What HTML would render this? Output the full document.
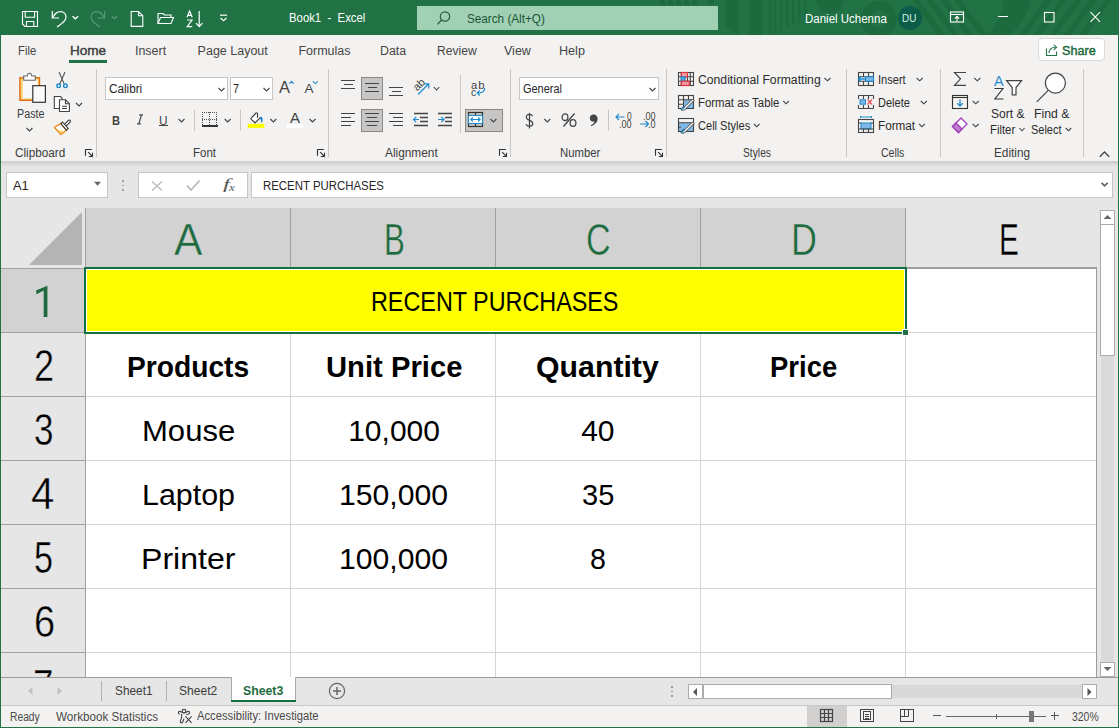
<!DOCTYPE html>
<html><head><meta charset="utf-8">
<style>
*{margin:0;padding:0;box-sizing:border-box}
html,body{width:1119px;height:728px;overflow:hidden;background:#f3f2f1;font-family:"Liberation Sans",sans-serif;position:relative}
.a{position:absolute}
.t{position:absolute;white-space:nowrap;line-height:1;transform-origin:0 0}
svg{overflow:visible}
</style></head><body>
<div class="a" style="left:0px;top:0px;width:1119px;height:35px;background:#217346"></div>
<div class="a" style="left:0px;top:35px;width:1119px;height:126px;background:#f3f2f1"></div>
<div class="a" style="left:0px;top:161px;width:1119px;height:47px;background:#e6e6e6"></div>
<div class="a" style="left:0px;top:161px;width:1119px;height:6px;background:linear-gradient(#cbcac9,#e6e6e6)"></div>
<svg class="a" style="left:0px;top:0px;overflow:hidden" width="1119" height="35" viewBox="0 0 1119 35"><g fill="#1d6a3e"><rect x="660" y="0" width="5" height="5"/><rect x="668" y="0" width="5" height="5"/><rect x="676" y="0" width="5" height="5"/><rect x="684" y="0" width="5" height="5"/><rect x="692" y="0" width="5" height="5"/><rect x="708" y="0" width="6" height="5"/><path d="M726,0 H739 V35 L726,27 Z"/><rect x="749" y="0" width="13" height="35"/><path d="M769,0 h2.5 V35 L769,38 Z"/><path d="M774,0 h2.5 V32 L774,35 Z"/><path d="M780,0 h2.5 V29 L780,32 Z"/><path d="M786,0 h2.5 V26 L786,29 Z"/><path d="M792,0 h2.5 V23 L792,26 Z"/><path d="M798,0 h2.5 V20 L798,23 Z"/><path d="M804,0 h2.5 V17 L804,20 Z"/><path d="M816,0 A14,13 0 0 0 844,0 Z"/><circle cx="879" cy="19" r="13.5" fill="none" stroke-width="9" stroke="#1d6a3e"/><path d="M912,0 h7 l26,35 h-7 Z"/><path d="M926,0 h7 l26,35 h-7 Z"/><path d="M940,0 h7 l26,35 h-7 Z"/><path d="M954,0 h7 l26,35 h-7 Z"/><path d="M1004,0 H1031 Q1027,22 1009,35 H986 Q1003,20 1004,0 Z"/><path d="M1045,0 h7 l-26,35 h-7 Z"/><path d="M1060,0 h7 l-26,35 h-7 Z"/><path d="M1075,0 h7 l-26,35 h-7 Z"/><path d="M1090,0 h7 l-26,35 h-7 Z"/><path d="M1105,0 h7 l-26,35 h-7 Z"/></g></svg>
<svg class="a" style="left:20px;top:9px;" width="22" height="22" viewBox="0 0 22 22"><g fill="none" stroke="#ffffff" stroke-width="1.1"><path d="M2.5,2.5 H17.5 V17.5 H5 L2.5,15 Z"/><path d="M5.2,2.5 V8.2 H14.6 V2.5"/><path d="M6.5,17.5 V12.5 H13.8 V17.5"/></g></svg>
<svg class="a" style="left:50px;top:9px;" width="32" height="22" viewBox="0 0 32 22"><g fill="none" stroke="#ffffff" stroke-width="1.2"><path d="M2.3,2 V9 H9"/><path d="M2.8,8.5 C5,4 8,2.6 10.5,2.6 C13.6,2.6 16,5 16,8 C16,10.8 14.5,12.6 7,18"/><path d="M22.5,7.3 L25.3,9.8 L28.1,7.3" stroke-width="1.3"/></g></svg>
<svg class="a" style="left:89px;top:9px;" width="32" height="22" viewBox="0 0 32 22"><g fill="none" stroke="#5e9c78" stroke-width="1.1"><path d="M15.7,2 V9 H9"/><path d="M15.2,8.5 C13,4 10,2.6 7.5,2.6 C4.4,2.6 2,5 2,8 C2,10.8 3.5,12.6 11,18"/><path d="M22.8,7.3 L25.5,9.8 L28.2,7.3" stroke-width="1.2"/></g></svg>
<svg class="a" style="left:128px;top:9px;" width="18" height="20" viewBox="0 0 18 20"><g fill="none" stroke="#ffffff" stroke-width="1.1"><path d="M3.2,2.5 H10.5 L14.8,6.8 V17.4 H3.2 Z"/><path d="M10.5,2.5 V6.8 H14.8"/></g></svg>
<svg class="a" style="left:155px;top:9px;" width="22" height="18" viewBox="0 0 22 18"><g fill="none" stroke="#ffffff" stroke-width="1.1"><path d="M3,14.5 V4.5 H8 L9.5,6 H16 V8.5"/><path d="M3,14.5 L5.5,8.5 H18.5 L16,14.5 Z"/></g></svg>
<svg class="a" style="left:184px;top:9px;" width="22" height="20" viewBox="0 0 22 20"><g fill="none" stroke="#ffffff" stroke-width="1.2"><path d="M3,8.3 L5.6,2 L8.2,8.3 M3.9,6.3 H7.3"/><path d="M3.2,11 H8 L3.2,17.6 H8.2"/><path d="M15.2,2 V17.5 M12,14.2 L15.2,17.6 L18.4,14.2"/></g></svg>
<svg class="a" style="left:217px;top:12px;" width="12" height="12" viewBox="0 0 12 12"><g fill="none" stroke="#ffffff" stroke-width="1.2"><path d="M3,3.2 H10"/><path d="M3.5,6 L6.5,8.8 L9.5,6"/></g></svg>
<div class="t" style="left:288.60px;top:12.42px;font-size:12px;color:#fff;transform:scaleX(0.9455);">Book1&nbsp; -&nbsp; Excel</div>
<div class="a" style="left:417px;top:6px;width:301px;height:24px;background:#a1d0b4"></div>
<svg class="a" style="left:434px;top:9px;" width="20" height="20" viewBox="0 0 20 20"><g fill="none" stroke="#1f5d3b" stroke-width="1.2"><circle cx="11" cy="7.5" r="4.7"/><path d="M7.6,11 L3.5,15.3"/></g></svg>
<div class="t" style="left:466.80px;top:13.22px;font-size:12px;color:#1a5535;transform:scaleX(0.9763);">Search (Alt+Q)</div>
<div class="t" style="left:804.60px;top:13.42px;font-size:12px;color:#fff;transform:scaleX(0.9578);">Daniel Uchenna</div>
<svg class="a" style="left:897px;top:6px;" width="26" height="26" viewBox="0 0 26 26"><circle cx="13" cy="12" r="12" fill="#0c5c4a"/></svg>
<div class="t" style="left:902.40px;top:13.35px;font-size:11.5px;color:#d6efe4;transform:scaleX(0.8611);">DU</div>
<svg class="a" style="left:948px;top:9px;" width="18" height="16" viewBox="0 0 18 16"><g fill="none" stroke="#ffffff" stroke-width="1.1"><rect x="2.5" y="3" width="13" height="10"/><path d="M2.5,5.5 H15.5"/><path d="M9,12.5 V7.5 M6.8,9.6 L9,7.4 L11.2,9.6"/></g></svg>
<div class="a" style="left:998px;top:16px;width:10px;height:1px;background:#fff"></div>
<svg class="a" style="left:1042px;top:10px;" width="14" height="14" viewBox="0 0 14 14"><rect x="2.5" y="2.5" width="9.5" height="9.5" fill="none" stroke="#ffffff" stroke-width="1.1"/></svg>
<svg class="a" style="left:1088px;top:10px;" width="14" height="14" viewBox="0 0 14 14"><path d="M2.5,2.2 L12,11.8 M12,2.2 L2.5,11.8" fill="none" stroke="#ffffff" stroke-width="1.1"/></svg>
<div class="t" style="left:18.40px;top:45.00px;font-size:12.5px;color:#454545;transform:scaleX(0.9038);">File</div>
<div class="t" style="left:134.60px;top:45.00px;font-size:12.5px;color:#454545;transform:scaleX(0.9948);">Insert</div>
<div class="t" style="left:197.60px;top:45.00px;font-size:12.5px;color:#454545;">Page Layout</div>
<div class="t" style="left:298.40px;top:45.00px;font-size:12.5px;color:#454545;">Formulas</div>
<div class="t" style="left:380.30px;top:45.00px;font-size:12.5px;color:#454545;transform:scaleX(0.9920);">Data</div>
<div class="t" style="left:436.50px;top:45.00px;font-size:12.5px;color:#454545;transform:scaleX(0.9677);">Review</div>
<div class="t" style="left:504.00px;top:45.00px;font-size:12.5px;color:#454545;">View</div>
<div class="t" style="left:559.20px;top:45.00px;font-size:12.5px;color:#454545;transform:scaleX(1.0073);">Help</div>
<div class="t" style="left:69.70px;top:45.00px;font-size:12.5px;color:#404040;transform:scaleX(1.0825);-webkit-text-stroke:0.4px #404040;">Home</div>
<div class="a" style="left:69px;top:60px;width:38px;height:3px;background:#217346"></div>
<div class="a" style="left:1038px;top:38px;width:67px;height:23px;background:#fff;border:1px solid #dcdad8;border-radius:4px"></div>
<svg class="a" style="left:1044px;top:42px;" width="16" height="16" viewBox="0 0 16 16"><g fill="none" stroke="#217346" stroke-width="1.1"><path d="M2.5,6.5 V13.5 H12.5 V9.5"/><path d="M4.8,11 C5.5,7 8,5.2 11.5,5.2"/><path d="M9.8,2.8 L12.6,5.2 L9.8,7.8"/></g></svg>
<div class="t" style="left:1062.20px;top:44.28px;font-size:13px;color:#1d6b3e;transform:scaleX(0.9716);-webkit-text-stroke:0.45px #1d6b3e;">Share</div>
<div class="a" style="left:96px;top:69px;width:1px;height:88px;background:#c8c6c4"></div>
<div class="a" style="left:328px;top:69px;width:1px;height:88px;background:#c8c6c4"></div>
<div class="a" style="left:510px;top:69px;width:1px;height:88px;background:#c8c6c4"></div>
<div class="a" style="left:666px;top:69px;width:1px;height:88px;background:#c8c6c4"></div>
<div class="a" style="left:846px;top:69px;width:1px;height:88px;background:#c8c6c4"></div>
<div class="a" style="left:940px;top:69px;width:1px;height:88px;background:#c8c6c4"></div>
<div class="a" style="left:1083px;top:69px;width:1px;height:88px;background:#c8c6c4"></div>
<div class="a" style="left:194px;top:110px;width:1px;height:21px;background:#c8c6c4"></div>
<div class="a" style="left:240px;top:110px;width:1px;height:21px;background:#c8c6c4"></div>
<div class="a" style="left:460px;top:75px;width:1px;height:58px;background:#c8c6c4"></div>
<div class="a" style="left:608px;top:110px;width:1px;height:21px;background:#c8c6c4"></div>
<div class="t" style="left:15.40px;top:147.42px;font-size:12px;color:#3b3b3b;transform:scaleX(0.9794);">Clipboard</div>
<div class="t" style="left:192.80px;top:147.42px;font-size:12px;color:#3b3b3b;transform:scaleX(0.9579);">Font</div>
<div class="t" style="left:385.00px;top:147.42px;font-size:12px;color:#3b3b3b;transform:scaleX(0.9876);">Alignment</div>
<div class="t" style="left:560.40px;top:147.42px;font-size:12px;color:#3b3b3b;transform:scaleX(0.9465);">Number</div>
<div class="t" style="left:742.50px;top:147.42px;font-size:12px;color:#3b3b3b;transform:scaleX(0.8569);">Styles</div>
<div class="t" style="left:881.40px;top:147.42px;font-size:12px;color:#3b3b3b;transform:scaleX(0.8753);">Cells</div>
<div class="t" style="left:993.60px;top:147.42px;font-size:12px;color:#3b3b3b;transform:scaleX(0.9810);">Editing</div>
<svg class="a" style="left:85px;top:149px;" width="9" height="9" viewBox="0 0 9 9"><g fill="none" stroke="#333" stroke-width="1.1"><path d="M0.5,6.8 V0.5 H6.8"/><path d="M3.2,3.2 L7.5,7.5 M3.8,7.5 H7.5 V3.8"/></g></svg>
<svg class="a" style="left:317px;top:149px;" width="9" height="9" viewBox="0 0 9 9"><g fill="none" stroke="#333" stroke-width="1.1"><path d="M0.5,6.8 V0.5 H6.8"/><path d="M3.2,3.2 L7.5,7.5 M3.8,7.5 H7.5 V3.8"/></g></svg>
<svg class="a" style="left:499px;top:149px;" width="9" height="9" viewBox="0 0 9 9"><g fill="none" stroke="#333" stroke-width="1.1"><path d="M0.5,6.8 V0.5 H6.8"/><path d="M3.2,3.2 L7.5,7.5 M3.8,7.5 H7.5 V3.8"/></g></svg>
<svg class="a" style="left:655px;top:149px;" width="9" height="9" viewBox="0 0 9 9"><g fill="none" stroke="#333" stroke-width="1.1"><path d="M0.5,6.8 V0.5 H6.8"/><path d="M3.2,3.2 L7.5,7.5 M3.8,7.5 H7.5 V3.8"/></g></svg>
<svg class="a" style="left:17px;top:71px;" width="32" height="34" viewBox="0 0 32 34"><rect x="2.9" y="6.8" width="19.6" height="22.5" fill="#f9d27a" stroke="#e36c09" stroke-width="1.4"/><rect x="5.8" y="8.6" width="14.8" height="18.9" fill="#f8f8f8"/><path d="M6.7,9.3 V5 H10.2 C10.5,3 11.4,2.3 12.5,2.3 C13.6,2.3 14.5,3 14.8,5 H18.3 V9.3 Z" fill="#fff" stroke="#666" stroke-width="1.1"/><rect x="15.8" y="14.7" width="12.6" height="16.6" fill="#fafafa" stroke="#333" stroke-width="1.2"/></svg>
<div class="t" style="left:16.50px;top:108.42px;font-size:12px;color:#3b3b3b;transform:scaleX(0.8962);">Paste</div>
<svg class="a" style="left:25px;top:127px;" width="9" height="6" viewBox="0 0 9 6"><path d="M1.50,1.00 L4.50,4.00 L7.50,1.00" fill="none" stroke="#444" stroke-width="1.1"/></svg>
<svg class="a" style="left:55px;top:71px;" width="14" height="19" viewBox="0 0 14 19"><g fill="none" stroke-width="1.1"><path d="M4,1 L9.2,13 M10,1 L4.8,13" stroke="#555"/><circle cx="3.6" cy="14.8" r="1.8" stroke="#1e8bcd" stroke-width="1.4"/><circle cx="10.4" cy="14.8" r="1.8" stroke="#1e8bcd" stroke-width="1.4"/></g></svg>
<svg class="a" style="left:53px;top:95px;" width="19" height="18" viewBox="0 0 19 18"><g fill="#fff" stroke="#444" stroke-width="1.1"><path d="M1.3,1.5 H7.5 L9,3 V13.5 H1.3 Z"/><path d="M6.5,4.8 H12.5 L16.4,8.7 V16.5 H6.5 Z"/><path d="M12.5,4.8 V8.7 H16.4" fill="none"/><path d="M9,11.2 H14 M9,13.5 H14" fill="none"/></g></svg>
<svg class="a" style="left:75px;top:102px;" width="9" height="6" viewBox="0 0 9 6"><path d="M1.00,1.00 L4.00,4.00 L7.00,1.00" fill="none" stroke="#444" stroke-width="1.1"/></svg>
<svg class="a" style="left:50px;top:115px;" width="24" height="23" viewBox="0 0 24 23"><path d="M4.3,12.2 L10.8,8.6 L16.4,15.2 L11,19.6 Z" fill="#fff" stroke="#e8860e" stroke-width="1.3" stroke-linejoin="round"/><path d="M7.5,14.6 L14.3,16.6 L11,18.6 Z" fill="#fbd46b"/><path d="M14.2,9.6 L18.4,5.4 C19,4.8 20,5 20.3,5.7 C20.6,6.3 20.3,6.9 19.9,7.3 L15.8,11.4" fill="#fff" stroke="#333" stroke-width="1.1"/><path d="M10.8,8.6 L12.4,7 L18.2,13.4 L16.4,15.2 Z" fill="#fff" stroke="#333" stroke-width="1.1"/></svg>
<div class="a" style="left:105px;top:77px;width:123px;height:23px;background:#fff;border:1px solid #c8c6c4"></div>
<div class="t" style="left:108.50px;top:83.20px;font-size:12.5px;color:#262626;transform:scaleX(0.9372);">Calibri</div>
<svg class="a" style="left:217px;top:87px;" width="9" height="6" viewBox="0 0 9 6"><path d="M1.50,1.00 L4.50,4.00 L7.50,1.00" fill="none" stroke="#444" stroke-width="1.1"/></svg>
<div class="a" style="left:230px;top:77px;width:43px;height:23px;background:#fff;border:1px solid #c8c6c4"></div>
<div class="t" style="left:233.00px;top:83.20px;font-size:12.5px;color:#262626;transform:scaleX(0.8633);">7</div>
<svg class="a" style="left:262px;top:87px;" width="9" height="6" viewBox="0 0 9 6"><path d="M1.50,1.00 L4.50,4.00 L7.50,1.00" fill="none" stroke="#444" stroke-width="1.1"/></svg>
<div class="t" style="left:279.00px;top:78.78px;font-size:17px;color:#444;transform:scaleX(0.9701);">A</div>
<svg class="a" style="left:288px;top:80px;" width="7" height="5" viewBox="0 0 7 5"><path d="M1.3,3.6 L3.5,1.3 L5.7,3.6" fill="none" stroke="#1e8bcd" stroke-width="1.1"/></svg>
<div class="t" style="left:304.40px;top:82.35px;font-size:13.5px;color:#444;">A</div>
<svg class="a" style="left:311px;top:80px;" width="8" height="5" viewBox="0 0 8 5"><path d="M1.80,1.40 L4.30,3.60 L6.80,1.40" fill="none" stroke="#1e8bcd" stroke-width="1.1"/></svg>
<div class="t" style="left:112.20px;top:113.58px;font-size:13px;color:#444;font-weight:bold;transform:scaleX(0.8523);">B</div>
<svg class="a" style="left:135px;top:113px;" width="10" height="13" viewBox="0 0 10 13"><path d="M4.2,1.8 H8 M6.5,1.8 L3.8,10.8 M2,10.8 H5.8" fill="none" stroke="#444" stroke-width="1.2"/></svg>
<div class="t" style="left:159.00px;top:113.58px;font-size:13px;color:#444;transform:scaleX(0.9056);">U</div>
<div class="a" style="left:159px;top:125px;width:9px;height:1px;background:#444"></div>
<svg class="a" style="left:177px;top:118px;" width="9" height="6" viewBox="0 0 9 6"><path d="M1.50,1.00 L4.50,4.00 L7.50,1.00" fill="none" stroke="#444" stroke-width="1.1"/></svg>
<svg class="a" style="left:201px;top:111px;" width="18" height="18" viewBox="0 0 18 18"><g fill="#555" shape-rendering="crispEdges"><rect x="1" y="1" width="1" height="1"/><rect x="1" y="8" width="1" height="1"/><rect x="3" y="1" width="1" height="1"/><rect x="3" y="8" width="1" height="1"/><rect x="5" y="1" width="1" height="1"/><rect x="5" y="8" width="1" height="1"/><rect x="7" y="1" width="1" height="1"/><rect x="7" y="8" width="1" height="1"/><rect x="9" y="1" width="1" height="1"/><rect x="9" y="8" width="1" height="1"/><rect x="11" y="1" width="1" height="1"/><rect x="11" y="8" width="1" height="1"/><rect x="13" y="1" width="1" height="1"/><rect x="13" y="8" width="1" height="1"/><rect x="15" y="1" width="1" height="1"/><rect x="15" y="8" width="1" height="1"/><rect x="1" y="1" width="1" height="1"/><rect x="8" y="1" width="1" height="1"/><rect x="15" y="1" width="1" height="1"/><rect x="1" y="3" width="1" height="1"/><rect x="8" y="3" width="1" height="1"/><rect x="15" y="3" width="1" height="1"/><rect x="1" y="5" width="1" height="1"/><rect x="8" y="5" width="1" height="1"/><rect x="15" y="5" width="1" height="1"/><rect x="1" y="7" width="1" height="1"/><rect x="8" y="7" width="1" height="1"/><rect x="15" y="7" width="1" height="1"/><rect x="1" y="9" width="1" height="1"/><rect x="8" y="9" width="1" height="1"/><rect x="15" y="9" width="1" height="1"/><rect x="1" y="11" width="1" height="1"/><rect x="8" y="11" width="1" height="1"/><rect x="15" y="11" width="1" height="1"/><rect x="1" y="13" width="1" height="1"/><rect x="8" y="13" width="1" height="1"/><rect x="15" y="13" width="1" height="1"/></g><rect x="1" y="14" width="16" height="2" fill="#333"/></svg>
<svg class="a" style="left:223px;top:118px;" width="9" height="6" viewBox="0 0 9 6"><path d="M1.70,1.00 L4.70,4.00 L7.70,1.00" fill="none" stroke="#444" stroke-width="1.1"/></svg>
<svg class="a" style="left:247px;top:111px;" width="18" height="18" viewBox="0 0 18 18"><path d="M3.6,7.6 L8.2,3 C8.6,1.4 10.5,1.3 10.5,3 V6.8 M3.6,7.6 L8,11.8 L13,6.8" fill="#fff" stroke="#333" stroke-width="1.1" stroke-linejoin="round"/><path d="M12.6,6.4 C14.2,4.8 16,6.2 15.6,9 C15.4,10.3 15,11.6 14.8,12.3 C14.3,10.5 13.8,8.3 12.6,6.4 Z" fill="#1e7ccd"/><rect x="0.8" y="12.8" width="16.5" height="4.1" fill="#ffff00"/></svg>
<svg class="a" style="left:269px;top:118px;" width="9" height="6" viewBox="0 0 9 6"><path d="M1.30,1.00 L4.30,4.00 L7.30,1.00" fill="none" stroke="#444" stroke-width="1.1"/></svg>
<div class="t" style="left:290.00px;top:111.13px;font-size:14px;color:#444;transform:scaleX(1.0709);">A</div>
<div class="a" style="left:287px;top:124px;width:16px;height:4px;background:#fff"></div>
<svg class="a" style="left:308px;top:118px;" width="9" height="6" viewBox="0 0 9 6"><path d="M1.50,1.00 L4.50,4.00 L7.50,1.00" fill="none" stroke="#444" stroke-width="1.1"/></svg>
<div class="a" style="left:361px;top:77px;width:22px;height:23px;background:#c8c6c4;border:1px solid #8a8886"></div>
<div class="a" style="left:361px;top:109px;width:22px;height:23px;background:#c8c6c4;border:1px solid #8a8886"></div>
<div class="a" style="left:341.0px;top:80px;width:14px;height:1.3px;background:#444"></div>
<div class="a" style="left:343.5px;top:84px;width:9px;height:1.3px;background:#444"></div>
<div class="a" style="left:341.0px;top:88px;width:14px;height:1.3px;background:#444"></div>
<div class="a" style="left:365.0px;top:83px;width:14px;height:1.3px;background:#444"></div>
<div class="a" style="left:367.5px;top:87px;width:9px;height:1.3px;background:#444"></div>
<div class="a" style="left:365.0px;top:91px;width:14px;height:1.3px;background:#444"></div>
<div class="a" style="left:389.0px;top:87px;width:14px;height:1.3px;background:#444"></div>
<div class="a" style="left:391.5px;top:91px;width:9px;height:1.3px;background:#444"></div>
<div class="a" style="left:389.0px;top:95px;width:14px;height:1.3px;background:#444"></div>
<div class="a" style="left:341px;top:113px;width:14px;height:1.3px;background:#444"></div>
<div class="a" style="left:341px;top:117px;width:10px;height:1.3px;background:#444"></div>
<div class="a" style="left:341px;top:121px;width:14px;height:1.3px;background:#444"></div>
<div class="a" style="left:341px;top:125px;width:10px;height:1.3px;background:#444"></div>
<div class="a" style="left:365.0px;top:113px;width:14px;height:1.3px;background:#444"></div>
<div class="a" style="left:367.0px;top:117px;width:10px;height:1.3px;background:#444"></div>
<div class="a" style="left:365.0px;top:121px;width:14px;height:1.3px;background:#444"></div>
<div class="a" style="left:367.0px;top:125px;width:10px;height:1.3px;background:#444"></div>
<div class="a" style="left:389px;top:113px;width:14px;height:1.3px;background:#444"></div>
<div class="a" style="left:393px;top:117px;width:10px;height:1.3px;background:#444"></div>
<div class="a" style="left:389px;top:121px;width:14px;height:1.3px;background:#444"></div>
<div class="a" style="left:393px;top:125px;width:10px;height:1.3px;background:#444"></div>
<div class="t" style="left:415.50px;top:80.27px;font-size:11px;color:#444;transform:scaleX(0.8993);transform:rotate(-45deg) ;transform-origin:30% 80%;">ab</div>
<svg class="a" style="left:416px;top:82px;" width="16" height="16" viewBox="0 0 16 16"><g fill="none" stroke="#1e8bcd" stroke-width="1.2"><path d="M2,12.5 L12.8,1.8 M8,1.8 H12.8 V6.6"/></g></svg>
<svg class="a" style="left:432px;top:86px;" width="8" height="6" viewBox="0 0 8 6"><path d="M1.80,1.00 L4.55,4.00 L7.30,1.00" fill="none" stroke="#444" stroke-width="1.1"/></svg>
<svg class="a" style="left:412px;top:111px;" width="18" height="17" viewBox="0 0 18 17"><g stroke="#444" stroke-width="1.3"><path d="M2,2.5 H16 M8,6.5 H16 M8,10.5 H16 M2,14.5 H16"/></g><path d="M1.5,8.5 H7 M4.2,5.8 L1.5,8.5 L4.2,11.2" fill="none" stroke="#1e8bcd" stroke-width="1.2"/></svg>
<svg class="a" style="left:436px;top:111px;" width="18" height="17" viewBox="0 0 18 17"><g stroke="#444" stroke-width="1.3"><path d="M2,2.5 H16 M9,6.5 H16 M9,10.5 H16 M2,14.5 H16"/></g><path d="M2,8.5 H8 M5.3,5.8 L8,8.5 L5.3,11.2" fill="none" stroke="#1e8bcd" stroke-width="1.2"/></svg>
<div class="t" style="left:470.70px;top:79.70px;font-size:10.5px;color:#444;transform:scaleX(1.0706);letter-spacing:1px;">ab</div>
<div class="t" style="left:470.70px;top:86.70px;font-size:10.5px;color:#444;transform:scaleX(0.9905);">c</div>
<svg class="a" style="left:474px;top:86px;" width="14" height="12" viewBox="0 0 14 12"><path d="M10.6,2 C11,5.2 8.5,7 3.2,7 M5.7,4.5 L3.2,7 L5.7,9.5" fill="none" stroke="#1e8bcd" stroke-width="1.2"/></svg>
<div class="a" style="left:465px;top:109px;width:38px;height:23px;background:#c8c6c4;border:1px solid #8a8886"></div>
<svg class="a" style="left:467px;top:111px;" width="18" height="18" viewBox="0 0 18 18"><g fill="none" stroke="#333" stroke-width="1.2"><rect x="1.5" y="1.5" width="14" height="14"/><path d="M8.5,1.5 V4.5 M8.5,12.5 V15.5"/></g><rect x="1.5" y="4.5" width="14" height="8" fill="#fff" stroke="#1e8bcd" stroke-width="1.1"/><path d="M3.8,8.5 H13.2 M5.8,6.5 L3.8,8.5 L5.8,10.5 M11.2,6.5 L13.2,8.5 L11.2,10.5" fill="none" stroke="#1e8bcd" stroke-width="1.1"/></svg>
<svg class="a" style="left:489px;top:118px;" width="9" height="6" viewBox="0 0 9 6"><path d="M1.40,1.00 L4.40,4.00 L7.40,1.00" fill="none" stroke="#444" stroke-width="1.1"/></svg>
<div class="a" style="left:519px;top:77px;width:140px;height:23px;background:#fff;border:1px solid #c8c6c4"></div>
<div class="t" style="left:522.60px;top:83.00px;font-size:12.5px;color:#262626;transform:scaleX(0.8746);">General</div>
<svg class="a" style="left:648px;top:87px;" width="9" height="6" viewBox="0 0 9 6"><path d="M1.50,1.00 L4.50,4.00 L7.50,1.00" fill="none" stroke="#444" stroke-width="1.1"/></svg>
<svg class="a" style="left:524px;top:112px;" width="11" height="17" viewBox="0 0 11 17"><path d="M8.6,4.2 C8,2.8 6.8,2.4 5.5,2.4 C3.5,2.4 2.3,3.5 2.3,5.2 C2.3,9 8.8,7.8 8.8,11.6 C8.8,13.3 7.5,14.3 5.4,14.3 C3.8,14.3 2.6,13.6 2,12.3 M5.5,0.8 V16.5" fill="none" stroke="#444" stroke-width="1.2"/></svg>
<svg class="a" style="left:543px;top:118px;" width="9" height="6" viewBox="0 0 9 6"><path d="M1.30,1.00 L4.30,4.00 L7.30,1.00" fill="none" stroke="#444" stroke-width="1.1"/></svg>
<svg class="a" style="left:560px;top:112px;" width="18" height="16" viewBox="0 0 18 16"><g fill="none" stroke="#444" stroke-width="1.3"><ellipse cx="5" cy="5.2" rx="2.9" ry="3.3"/><ellipse cx="13" cy="11" rx="2.9" ry="3.3"/><path d="M14.5,1.5 L3.5,14.5"/></g></svg>
<svg class="a" style="left:588px;top:113px;" width="11" height="15" viewBox="0 0 11 15"><path d="M5.5,1.5 C8,1.5 9.6,3.2 9.6,5.6 C9.6,9 7.5,11.5 3,13.3 L2.6,12.5 C5,11.2 6.2,10 6.6,8.8 C3.8,9 1.8,7.6 1.8,5.2 C1.8,3 3.4,1.5 5.5,1.5 Z" fill="#444"/></svg>
<div class="t" style="left:626.60px;top:110.70px;font-size:10.5px;color:#444;transform:scaleX(0.8051);">0</div>
<div class="t" style="left:618.70px;top:118.70px;font-size:10.5px;color:#444;transform:scaleX(0.8633);">.00</div>
<svg class="a" style="left:614px;top:112px;" width="12" height="10" viewBox="0 0 12 10"><path d="M2,5 H10.5 M5,2 L2,5 L5,8" fill="none" stroke="#1e8bcd" stroke-width="1.2"/></svg>
<div class="t" style="left:643.00px;top:110.70px;font-size:10.5px;color:#444;transform:scaleX(0.8633);">.00</div>
<div class="t" style="left:648.00px;top:118.70px;font-size:10.5px;color:#444;transform:scaleX(0.8679);">.0</div>
<svg class="a" style="left:638px;top:119px;" width="12" height="10" viewBox="0 0 12 10"><path d="M2,5 H10.5 M7.5,2 L10.5,5 L7.5,8" fill="none" stroke="#1e8bcd" stroke-width="1.2"/></svg>
<svg class="a" style="left:677px;top:71px;" width="18" height="16" viewBox="0 0 18 16"><g fill="none" stroke="#444" stroke-width="1.1"><rect x="1.5" y="1.5" width="15" height="13"/><path d="M1.5,5.8 H16.5 M1.5,10.2 H16.5 M4.3,1.5 V14.5 M13.3,1.5 V14.5 M7.8,1.5 V14.5 M10.5,1.5 V14.5"/></g><rect x="4.3" y="1.5" width="6.2" height="4.3" fill="#f39aa3" stroke="#e0303c" stroke-width="1.1"/><rect x="4.3" y="5.8" width="3.5" height="4.4" fill="#5aa7e0" stroke="#1e8bcd" stroke-width="1.1"/><rect x="4.3" y="10.2" width="8" height="4.3" fill="#f39aa3" stroke="#e0303c" stroke-width="1.1"/></svg>
<svg class="a" style="left:677px;top:94px;" width="18" height="17" viewBox="0 0 18 17"><rect x="6.5" y="5.8" width="10" height="8.7" fill="#7fb8e6"/><g fill="none" stroke="#444" stroke-width="1.1"><rect x="1.5" y="1.5" width="15" height="13"/><path d="M1.5,5.8 H16.5 M1.5,10.2 H6.5 M6.5,1.5 V14.5 M11.5,1.5 V5.8"/></g><path d="M4,16 C5,13 6.5,12 8,12.5 L15.5,5 L17,6.5 L9.5,14 C9,15.5 7,16.5 4,16 Z" fill="#fff" stroke="#444" stroke-width="1"/><path d="M4.2,15.8 C5.5,14 7,13.8 8,13" stroke="#1e8bcd" stroke-width="1.3" fill="none"/></svg>
<svg class="a" style="left:677px;top:117px;" width="18" height="17" viewBox="0 0 18 17"><rect x="1.5" y="5.8" width="15" height="8.7" fill="#7fb8e6"/><g fill="none" stroke="#444" stroke-width="1.1"><rect x="1.5" y="1.5" width="15" height="13"/><path d="M1.5,5.8 H16.5 M1.5,10.2 H4"/></g><path d="M4,16 C5,13 6.5,12 8,12.5 L15.5,5 L17,6.5 L9.5,14 C9,15.5 7,16.5 4,16 Z" fill="#fff" stroke="#444" stroke-width="1"/><path d="M4.2,15.8 C5.5,14 7,13.8 8,13" stroke="#1e8bcd" stroke-width="1.3" fill="none"/></svg>
<div class="t" style="left:697.70px;top:74.00px;font-size:12.5px;color:#2b2b2b;transform:scaleX(0.9756);">Conditional Formatting</div>
<svg class="a" style="left:823px;top:77px;" width="9" height="5" viewBox="0 0 9 5"><path d="M1.50,1.00 L4.50,3.80 L7.50,1.00" fill="none" stroke="#444" stroke-width="1.1"/></svg>
<div class="t" style="left:697.70px;top:97.00px;font-size:12.5px;color:#2b2b2b;transform:scaleX(0.9095);">Format as Table</div>
<svg class="a" style="left:782px;top:100px;" width="8" height="5" viewBox="0 0 8 5"><path d="M1.30,1.00 L4.05,3.80 L6.80,1.00" fill="none" stroke="#444" stroke-width="1.1"/></svg>
<div class="t" style="left:697.70px;top:120.00px;font-size:12.5px;color:#2b2b2b;transform:scaleX(0.8840);">Cell Styles</div>
<svg class="a" style="left:753px;top:123px;" width="8" height="5" viewBox="0 0 8 5"><path d="M1.00,1.00 L3.75,3.80 L6.50,1.00" fill="none" stroke="#444" stroke-width="1.1"/></svg>
<svg class="a" style="left:857px;top:71px;" width="18" height="16" viewBox="0 0 18 16"><g fill="none" stroke="#444" stroke-width="1.1"><rect x="1.5" y="1.5" width="15" height="13"/><path d="M1.5,5.8 H16.5 M1.5,10.2 H16.5 M6.5,1.5 V5.8 M6.5,10.2 V14.5 M11.5,1.5 V14.5"/></g><rect x="8.5" y="5.8" width="8" height="4.4" fill="#7fb8e6" stroke="#1e8bcd" stroke-width="1.1"/><path d="M1.5,8 H8 M4.2,5.3 L1.5,8 L4.2,10.7" fill="none" stroke="#1e8bcd" stroke-width="1.3"/></svg>
<svg class="a" style="left:857px;top:94px;" width="18" height="16" viewBox="0 0 18 16"><rect x="3" y="5.8" width="5.5" height="4.4" fill="#7fb8e6" stroke="#1e8bcd" stroke-width="1"/><g fill="none" stroke="#444" stroke-width="1.1"><path d="M1.5,1.5 H16.5 M1.5,14.5 H16.5 M1.5,1.5 V5 M16.5,1.5 V5 M1.5,11 V14.5 M16.5,11 V14.5 M6.5,1.5 V5 M11.5,1.5 V5 M6.5,11 V14.5 M11.5,11 V14.5"/></g><path d="M10.5,5.5 L15,10.5 M15,5.5 L10.5,10.5" stroke="#e8505b" stroke-width="1.3"/></svg>
<svg class="a" style="left:857px;top:116px;" width="18" height="18" viewBox="0 0 18 18"><rect x="4" y="7" width="10" height="6" fill="#7fb8e6" stroke="#1e8bcd" stroke-width="1"/><g fill="none" stroke="#444" stroke-width="1.1"><rect x="1.5" y="3.5" width="15" height="13"/><path d="M1.5,7 H4 M14,7 H16.5 M1.5,13 H16.5 M6.5,13 V16.5 M11.5,13 V16.5"/></g><path d="M3.5,1 H14.5 M3.5,0 V2 M14.5,0 V2" stroke="#1e8bcd" stroke-width="1.1" fill="none"/></svg>
<div class="t" style="left:877.70px;top:74.00px;font-size:12.5px;color:#2b2b2b;transform:scaleX(0.8860);">Insert</div>
<svg class="a" style="left:915px;top:77px;" width="9" height="5" viewBox="0 0 9 5"><path d="M1.70,1.00 L4.70,3.80 L7.70,1.00" fill="none" stroke="#444" stroke-width="1.1"/></svg>
<div class="t" style="left:877.70px;top:97.00px;font-size:12.5px;color:#2b2b2b;transform:scaleX(0.8827);">Delete</div>
<svg class="a" style="left:919px;top:100px;" width="9" height="5" viewBox="0 0 9 5"><path d="M1.80,1.00 L4.80,3.80 L7.80,1.00" fill="none" stroke="#444" stroke-width="1.1"/></svg>
<div class="t" style="left:877.70px;top:120.00px;font-size:12.5px;color:#2b2b2b;transform:scaleX(0.9372);">Format</div>
<svg class="a" style="left:918px;top:123px;" width="8" height="5" viewBox="0 0 8 5"><path d="M1.20,1.00 L3.95,3.80 L6.70,1.00" fill="none" stroke="#444" stroke-width="1.1"/></svg>
<svg class="a" style="left:952px;top:71px;" width="16" height="16" viewBox="0 0 16 16"><path d="M14,1.5 H2.5 L8.5,7.8 L2.5,14.3 H14" fill="none" stroke="#444" stroke-width="1.2"/></svg>
<svg class="a" style="left:973px;top:77px;" width="9" height="5" viewBox="0 0 9 5"><path d="M1.30,1.00 L4.30,3.80 L7.30,1.00" fill="none" stroke="#444" stroke-width="1.1"/></svg>
<svg class="a" style="left:951px;top:94px;" width="18" height="16" viewBox="0 0 18 16"><g fill="none" stroke="#333" stroke-width="1.1"><rect x="1.5" y="1.5" width="15" height="13"/><path d="M1.5,3.5 H16.5"/></g><path d="M9,5.5 V12 M6.3,9.3 L9,12 L11.7,9.3" fill="none" stroke="#1e8bcd" stroke-width="1.3"/></svg>
<svg class="a" style="left:971px;top:100px;" width="9" height="5" viewBox="0 0 9 5"><path d="M1.70,1.00 L4.70,3.80 L7.70,1.00" fill="none" stroke="#444" stroke-width="1.1"/></svg>
<svg class="a" style="left:951px;top:116px;" width="18" height="18" viewBox="0 0 18 18"><path d="M1.5,10.5 L10,2 L16,8 L7.5,16.5 Z" fill="#fff" stroke="#a03fb8" stroke-width="1.3"/><path d="M1.5,10.5 L5,7 L11,13 L7.5,16.5 Z" fill="#c07dd0" stroke="#a03fb8" stroke-width="1.3"/></svg>
<svg class="a" style="left:971px;top:123px;" width="9" height="5" viewBox="0 0 9 5"><path d="M1.70,1.00 L4.70,3.80 L7.70,1.00" fill="none" stroke="#444" stroke-width="1.1"/></svg>
<div class="t" style="left:994.30px;top:73.28px;font-size:15px;color:#1e8bcd;transform:scaleX(0.9595);">A</div>
<svg class="a" style="left:992px;top:86px;" width="14" height="16" viewBox="0 0 14 16"><path d="M2.5,2.5 H11 L2.8,13 H11.5" fill="none" stroke="#333" stroke-width="1.1"/></svg>
<svg class="a" style="left:1005px;top:79px;" width="19" height="18" viewBox="0 0 19 18"><path d="M1.6,1.6 H16.6 L11,8.5 V15.8 H7.2 V8.5 Z" fill="#fff" stroke="#444" stroke-width="1.2"/></svg>
<div class="t" style="left:991.10px;top:108.00px;font-size:12.5px;color:#2b2b2b;transform:scaleX(0.9615);">Sort &amp;</div>
<div class="t" style="left:989.70px;top:124.00px;font-size:12.5px;color:#2b2b2b;transform:scaleX(0.9073);">Filter</div>
<svg class="a" style="left:1018px;top:127px;" width="8" height="5" viewBox="0 0 8 5"><path d="M1.40,1.00 L4.00,3.80 L6.60,1.00" fill="none" stroke="#444" stroke-width="1.1"/></svg>
<svg class="a" style="left:1035px;top:71px;" width="33" height="33" viewBox="0 0 33 33"><circle cx="20.4" cy="12.1" r="10" fill="#fff" stroke="#444" stroke-width="1.2"/><path d="M13.2,19.3 L1.8,30.8" stroke="#444" stroke-width="1.2"/></svg>
<div class="t" style="left:1034.40px;top:108.00px;font-size:12.5px;color:#2b2b2b;transform:scaleX(0.9799);">Find &amp;</div>
<div class="t" style="left:1031.40px;top:124.00px;font-size:12.5px;color:#2b2b2b;transform:scaleX(0.8780);">Select</div>
<svg class="a" style="left:1064px;top:127px;" width="8" height="5" viewBox="0 0 8 5"><path d="M1.70,1.00 L4.45,3.80 L7.20,1.00" fill="none" stroke="#444" stroke-width="1.1"/></svg>
<svg class="a" style="left:1098px;top:150px;" width="13" height="9" viewBox="0 0 13 9"><path d="M1.8,6.8 L6.5,2 L11.2,6.8" fill="none" stroke="#444" stroke-width="1.3"/></svg>
<div class="a" style="left:6px;top:172px;width:102px;height:26px;background:#fff;border:1px solid #c6c6c6"></div>
<div class="t" style="left:13.20px;top:180.00px;font-size:12.5px;color:#262626;transform:scaleX(1.0270);">A1</div>
<svg class="a" style="left:93px;top:181px;" width="10" height="6" viewBox="0 0 10 6"><path d="M1,0.8 H8 L4.5,4.8 Z" fill="#666"/></svg>
<div class="a" style="left:122px;top:180px;width:1.5px;height:1.5px;background:#a0a0a0"></div>
<div class="a" style="left:122px;top:184.5px;width:1.5px;height:1.5px;background:#a0a0a0"></div>
<div class="a" style="left:122px;top:189px;width:1.5px;height:1.5px;background:#a0a0a0"></div>
<div class="a" style="left:138px;top:172px;width:110px;height:26px;background:#fff;border:1px solid #c6c6c6"></div>
<svg class="a" style="left:150px;top:180px;" width="14" height="12" viewBox="0 0 14 12"><path d="M2,1.5 L12,10.5 M12,1.5 L2,10.5" stroke="#b8b8b8" stroke-width="1.3"/></svg>
<svg class="a" style="left:185px;top:179px;" width="16" height="13" viewBox="0 0 16 13"><path d="M2,6.5 L6,11 L14.5,1.5" fill="none" stroke="#b8b8b8" stroke-width="1.7"/></svg>
<div class="t" style="left:223.00px;top:178.23px;font-size:14px;color:#555;transform:scaleX(1.7857);font-family:&quot;Liberation Serif&quot;,serif;font-style:italic;">f</div>
<div class="t" style="left:228.50px;top:182.62px;font-size:10px;color:#555;transform:scaleX(1.3000);font-family:&quot;Liberation Serif&quot;,serif;font-style:italic;">x</div>
<div class="a" style="left:251px;top:172px;width:862px;height:26px;background:#fff;border:1px solid #c6c6c6"></div>
<div class="t" style="left:263.40px;top:180.42px;font-size:12px;color:#262626;transform:scaleX(0.9509);">RECENT PURCHASES</div>
<svg class="a" style="left:1100px;top:181px;" width="10" height="8" viewBox="0 0 10 8"><path d="M1.6,1.8 L4.6,4.8 L7.6,1.8" fill="none" stroke="#666" stroke-width="1.8"/></svg>
<div class="a" style="left:1px;top:208px;width:1117px;height:60px;background:#e6e6e6"></div>
<svg class="a" style="left:1px;top:208px;" width="84" height="60" viewBox="0 0 84 60"><path d="M81,4 V57 H28 Z" fill="#b4b4b4"/></svg>
<div class="a" style="left:86px;top:208px;width:819px;height:60px;background:#d2d2d2"></div>
<div class="a" style="left:85px;top:208px;width:1px;height:60px;background:#a0a0a0"></div>
<div class="a" style="left:290px;top:208px;width:1px;height:60px;background:#a0a0a0"></div>
<div class="a" style="left:495px;top:208px;width:1px;height:60px;background:#a0a0a0"></div>
<div class="a" style="left:700px;top:208px;width:1px;height:60px;background:#a0a0a0"></div>
<div class="a" style="left:905px;top:208px;width:1px;height:60px;background:#a0a0a0"></div>
<div class="a" style="left:906px;top:267px;width:191px;height:1px;background:#a0a0a0"></div>
<div class="a" style="left:1px;top:268px;width:85px;height:409px;background:#e6e6e6"></div>
<div class="a" style="left:1px;top:268px;width:84px;height:64px;background:#d2d2d2"></div>
<div class="a" style="left:85px;top:268px;width:1px;height:409px;background:#a0a0a0"></div>
<div class="a" style="left:1px;top:332px;width:84px;height:1px;background:#a0a0a0"></div>
<div class="a" style="left:1px;top:396px;width:84px;height:1px;background:#a0a0a0"></div>
<div class="a" style="left:1px;top:460px;width:84px;height:1px;background:#a0a0a0"></div>
<div class="a" style="left:1px;top:524px;width:84px;height:1px;background:#a0a0a0"></div>
<div class="a" style="left:1px;top:588px;width:84px;height:1px;background:#a0a0a0"></div>
<div class="a" style="left:1px;top:652px;width:84px;height:1px;background:#a0a0a0"></div>
<div class="a" style="left:1px;top:268px;width:84px;height:1px;background:#a0a0a0"></div>
<div class="a" style="left:86px;top:268px;width:1011px;height:409px;background:#fff"></div>
<div class="a" style="left:290px;top:332px;width:1px;height:345px;background:#d4d4d4"></div>
<div class="a" style="left:495px;top:332px;width:1px;height:345px;background:#d4d4d4"></div>
<div class="a" style="left:700px;top:332px;width:1px;height:345px;background:#d4d4d4"></div>
<div class="a" style="left:905px;top:332px;width:1px;height:345px;background:#d4d4d4"></div>
<div class="a" style="left:86px;top:332px;width:1011px;height:1px;background:#d4d4d4"></div>
<div class="a" style="left:86px;top:396px;width:1011px;height:1px;background:#d4d4d4"></div>
<div class="a" style="left:86px;top:460px;width:1011px;height:1px;background:#d4d4d4"></div>
<div class="a" style="left:86px;top:524px;width:1011px;height:1px;background:#d4d4d4"></div>
<div class="a" style="left:86px;top:588px;width:1011px;height:1px;background:#d4d4d4"></div>
<div class="a" style="left:86px;top:652px;width:1011px;height:1px;background:#d4d4d4"></div>
<div class="a" style="left:1096px;top:268px;width:1px;height:409px;background:#9b9b9b"></div>
<div class="a" style="left:906px;top:268px;width:190px;height:1px;background:#9b9b9b"></div>
<div class="a" style="left:84px;top:267px;width:823px;height:67px;border:2px solid #137040;background:#fff"></div>
<div class="a" style="left:87px;top:270px;width:817px;height:61px;background:#ffff00"></div>
<div class="a" style="left:902px;top:329px;width:7px;height:7px;background:#217346;border:1px solid #fff"></div>
<div class="t" style="left:173.80px;top:217.69px;font-size:44px;color:#1d6b3e;transform:scaleX(0.9677);-webkit-text-stroke:0.45px #d2d2d2;">A</div>
<div class="t" style="left:383.80px;top:217.69px;font-size:44px;color:#1d6b3e;transform:scaleX(0.7087);-webkit-text-stroke:0.45px #d2d2d2;">B</div>
<div class="t" style="left:586.40px;top:217.69px;font-size:44px;color:#1d6b3e;transform:scaleX(0.7744);-webkit-text-stroke:0.45px #d2d2d2;">C</div>
<div class="t" style="left:790.70px;top:217.69px;font-size:44px;color:#1d6b3e;transform:scaleX(0.8153);-webkit-text-stroke:0.45px #d2d2d2;">D</div>
<div class="t" style="left:998.80px;top:218.19px;font-size:44px;color:#000;transform:scaleX(0.6781);-webkit-text-stroke:0.45px #e6e6e6;">E</div>
<svg class="a" style="left:30px;top:280px;" width="24" height="42" viewBox="0 0 24 42"><path d="M17.4,5.8 V37 H13.7 V10.6 L6.6,14.3 L6,10.4 Z" fill="#1d6b3e"/></svg>
<div class="t" style="left:33.70px;top:343.69px;font-size:44px;color:#000;transform:scaleX(0.8216);-webkit-text-stroke:0.45px #e6e6e6;">2</div>
<div class="t" style="left:33.70px;top:408.19px;font-size:44px;color:#000;transform:scaleX(0.7971);-webkit-text-stroke:0.45px #e6e6e6;">3</div>
<div class="t" style="left:31.40px;top:472.39px;font-size:44px;color:#000;transform:scaleX(0.9565);-webkit-text-stroke:0.45px #e6e6e6;">4</div>
<div class="t" style="left:34.20px;top:535.69px;font-size:44px;color:#000;transform:scaleX(0.7767);-webkit-text-stroke:0.45px #e6e6e6;">5</div>
<div class="t" style="left:33.70px;top:600.49px;font-size:44px;color:#000;transform:scaleX(0.8625);-webkit-text-stroke:0.45px #e6e6e6;">6</div>
<div class="t" style="left:33.20px;top:664.19px;font-size:44px;color:#000;transform:scaleX(0.8339);-webkit-text-stroke:0.45px #e6e6e6;">7</div>
<div class="t" style="left:371.30px;top:287.60px;font-size:27.6px;color:#000;transform:scaleX(0.8464);">RECENT PURCHASES</div>
<div class="t" style="left:127.20px;top:351.56px;font-size:30px;color:#000;font-weight:bold;transform:scaleX(0.9391);">Products</div>
<div class="t" style="left:325.60px;top:351.56px;font-size:30px;color:#000;font-weight:bold;transform:scaleX(0.9740);">Unit Price</div>
<div class="t" style="left:536.20px;top:351.56px;font-size:30px;color:#000;font-weight:bold;transform:scaleX(1.0092);">Quantity</div>
<div class="t" style="left:770.00px;top:351.56px;font-size:30px;color:#000;font-weight:bold;transform:scaleX(0.9158);">Price</div>
<div class="t" style="left:141.80px;top:415.56px;font-size:30px;color:#000;transform:scaleX(1.0352);">Mouse</div>
<div class="t" style="left:348.20px;top:415.56px;font-size:30px;color:#000;">10,000</div>
<div class="t" style="left:581.20px;top:415.56px;font-size:30px;color:#000;">40</div>
<div class="t" style="left:141.80px;top:479.56px;font-size:30px;color:#000;transform:scaleX(1.0134);">Laptop</div>
<div class="t" style="left:339.00px;top:479.56px;font-size:30px;color:#000;transform:scaleX(1.0051);">150,000</div>
<div class="t" style="left:581.50px;top:479.56px;font-size:30px;color:#000;transform:scaleX(0.9682);">35</div>
<div class="t" style="left:140.50px;top:543.56px;font-size:30px;color:#000;transform:scaleX(1.0696);">Printer</div>
<div class="t" style="left:339.00px;top:543.56px;font-size:30px;color:#000;transform:scaleX(1.0051);">100,000</div>
<div class="t" style="left:590.30px;top:543.56px;font-size:30px;color:#000;transform:scaleX(0.9532);">8</div>
<div class="a" style="left:1097px;top:208px;width:21px;height:470px;background:#e6e6e6"></div>
<div class="a" style="left:1100px;top:210px;width:15px;height:15px;background:#fff;border:1px solid #ababab"></div>
<svg class="a" style="left:1102px;top:213px;" width="11" height="8" viewBox="0 0 11 8"><path d="M1.5,6 L5.5,2 L9.5,6 Z" fill="#666"/></svg>
<div class="a" style="left:1100px;top:224px;width:15px;height:132px;background:#fff;border:1px solid #ababab"></div>
<div class="a" style="left:1101px;top:356px;width:13px;height:306px;background:#dadada"></div>
<div class="a" style="left:1100px;top:662px;width:15px;height:15px;background:#fff;border:1px solid #ababab"></div>
<svg class="a" style="left:1102px;top:665px;" width="11" height="8" viewBox="0 0 11 8"><path d="M1.5,2 L5.5,6 L9.5,2 Z" fill="#666"/></svg>
<div class="a" style="left:1px;top:677px;width:1117px;height:1px;background:#9b9b9b"></div>
<div class="a" style="left:1px;top:678px;width:1117px;height:27px;background:#e6e6e6"></div>
<svg class="a" style="left:26px;top:686px;" width="10" height="10" viewBox="0 0 10 10"><path d="M6.5,1 L2,5 L6.5,9 Z" fill="#c2c2c2"/></svg>
<svg class="a" style="left:55px;top:686px;" width="10" height="10" viewBox="0 0 10 10"><path d="M2.5,1 L7,5 L2.5,9 Z" fill="#c2c2c2"/></svg>
<div class="a" style="left:101px;top:681px;width:1px;height:20px;background:#b0b0b0"></div>
<div class="a" style="left:166px;top:681px;width:1px;height:20px;background:#b0b0b0"></div>
<div class="t" style="left:114.50px;top:685.00px;font-size:12.5px;color:#3b3b3b;transform:scaleX(0.9467);">Sheet1</div>
<div class="t" style="left:179.30px;top:685.00px;font-size:12.5px;color:#3b3b3b;transform:scaleX(0.9643);">Sheet2</div>
<div class="a" style="left:231px;top:677px;width:65px;height:25px;background:#fff;border-left:1px solid #ababab;border-right:1px solid #ababab"></div>
<div class="a" style="left:231px;top:700px;width:65px;height:2px;background:#137040"></div>
<div class="t" style="left:243.00px;top:685.00px;font-size:12.5px;color:#1d6b3e;font-weight:bold;transform:scaleX(0.9832);">Sheet3</div>
<svg class="a" style="left:328px;top:682px;" width="18" height="18" viewBox="0 0 18 18"><circle cx="9" cy="9" r="7.6" fill="none" stroke="#666" stroke-width="1.2"/><path d="M9,5 V13 M5,9 H13" stroke="#666" stroke-width="1.5"/></svg>
<div class="a" style="left:671px;top:686px;width:1.6px;height:1.6px;background:#999"></div>
<div class="a" style="left:671px;top:690.5px;width:1.6px;height:1.6px;background:#999"></div>
<div class="a" style="left:671px;top:695px;width:1.6px;height:1.6px;background:#999"></div>
<div class="a" style="left:688px;top:684px;width:15px;height:15px;background:#fff;border:1px solid #ababab"></div>
<svg class="a" style="left:690px;top:687px;" width="10" height="10" viewBox="0 0 10 10"><path d="M7,1 L3,5 L7,9 Z" fill="#555"/></svg>
<div class="a" style="left:703px;top:684px;width:189px;height:15px;background:#fff;border:1px solid #ababab"></div>
<div class="a" style="left:892px;top:685px;width:190px;height:13px;background:#d8d8d8"></div>
<div class="a" style="left:1082px;top:684px;width:15px;height:15px;background:#fff;border:1px solid #ababab"></div>
<svg class="a" style="left:1084px;top:687px;" width="10" height="10" viewBox="0 0 10 10"><path d="M3.5,1 L7.5,5 L3.5,9 Z" fill="#555"/></svg>
<div class="a" style="left:1px;top:705px;width:1117px;height:1px;background:#c8c8c8"></div>
<div class="a" style="left:1px;top:706px;width:1117px;height:21px;background:#f3f2f1"></div>
<div class="t" style="left:9.70px;top:710.82px;font-size:12px;color:#4a4a4a;transform:scaleX(0.8561);">Ready</div>
<div class="t" style="left:55.50px;top:710.82px;font-size:12px;color:#4a4a4a;transform:scaleX(0.9710);">Workbook Statistics</div>
<svg class="a" style="left:172px;top:704px;" width="24" height="24" viewBox="0 0 24 24"><g fill="none" stroke="#444" stroke-width="1.1"><circle cx="12" cy="7.2" r="1.8"/><path d="M7.8,10.2 C5.8,9.5 6,7.2 8,7.4 L10.5,8.4 Q12,9 13.5,8.4 L16,7.4 C18,7.2 18.2,9.6 16,10.3 L14.3,10.7"/><path d="M9.6,10 L9.6,13.6 L8.3,17.3 C8,19.2 10.4,19.4 10.9,17.5 L12,14.8"/><path d="M13.4,12.3 L19.6,18.8 M19.6,12.3 L13.4,18.8"/></g></svg>
<div class="t" style="left:196.60px;top:710.42px;font-size:12px;color:#4a4a4a;transform:scaleX(0.9350);">Accessibility: Investigate</div>
<div class="a" style="left:807px;top:706px;width:40px;height:21px;background:#d2d0ce"></div>
<svg class="a" style="left:819px;top:708px;" width="16" height="16" viewBox="0 0 16 16"><g fill="none" stroke="#444" stroke-width="1.2"><rect x="1.5" y="1.5" width="12" height="12"/><path d="M5.5,1.5 V13.5 M9.5,1.5 V13.5 M1.5,5.5 H13.5 M1.5,9.5 H13.5"/></g></svg>
<svg class="a" style="left:859px;top:708px;" width="17" height="16" viewBox="0 0 17 16"><g fill="none" stroke="#444" stroke-width="1"><rect x="1.5" y="1.5" width="13" height="12"/><rect x="4.5" y="3.5" width="7" height="8"/><path d="M6,6.5 H10 M6,8.5 H10 M6,10.5 H10"/></g></svg>
<svg class="a" style="left:899px;top:708px;" width="17" height="16" viewBox="0 0 17 16"><g fill="none" stroke="#444" stroke-width="1"><rect x="1.5" y="1.5" width="13" height="12"/><path d="M1.5,8.5 H9.5 V1.5 M5.5,1.5 V8.5"/></g></svg>
<div class="a" style="left:933px;top:715px;width:8px;height:1.2px;background:#555"></div>
<div class="a" style="left:946px;top:716px;width:100px;height:1px;background:#666"></div>
<div class="a" style="left:996px;top:713.5px;width:1px;height:5px;background:#666"></div>
<div class="a" style="left:1029px;top:711px;width:5px;height:11px;background:#777"></div>
<div class="a" style="left:1051px;top:715px;width:7.5px;height:1.2px;background:#555"></div>
<div class="a" style="left:1054.2px;top:711.8px;width:1.2px;height:8px;background:#555"></div>
<div class="t" style="left:1072.30px;top:710.62px;font-size:12px;color:#4a4a4a;transform:scaleX(0.8698);">320%</div>
<div class="a" style="left:0px;top:727px;width:1119px;height:1px;background:#217346"></div>
<div class="a" style="left:0px;top:35px;width:1px;height:693px;background:#217346"></div>
<div class="a" style="left:1118px;top:35px;width:1px;height:693px;background:#217346"></div>
</body></html>
